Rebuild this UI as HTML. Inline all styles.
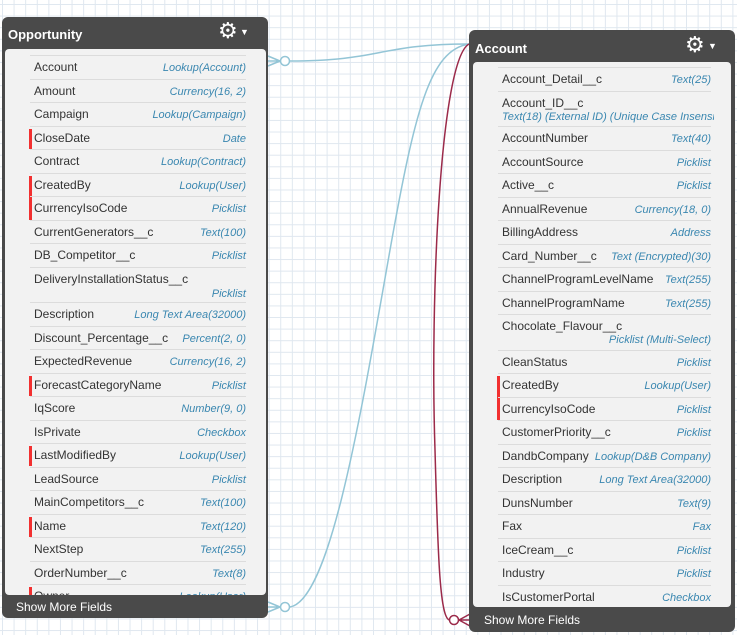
<!DOCTYPE html>
<html><head><meta charset="utf-8"><style>
body{margin:0;width:737px;height:635px;overflow:hidden;font-family:"Liberation Sans",sans-serif;
background-color:#fff;
background-image:linear-gradient(#dfe7ef 1px,transparent 1px),linear-gradient(90deg,#dfe7ef 1px,transparent 1px);
background-size:11.6px 11.6px;background-position:2px 4px;position:relative}
.box{position:absolute;background:#4a4a4a;border-radius:6px}
.hd{position:absolute;left:6px;top:0;color:#fff;font-weight:bold;font-size:13px}
.gear{position:absolute;top:1px;color:#fff;font-size:22px;line-height:26px}
.car{position:absolute;color:#fff;font-size:9px}
.pan{position:absolute;background:#f2f2f2;border-radius:4px;overflow:hidden}
.row{position:absolute;left:25px;right:20px;border-top:1px solid #dcdcdc;font-size:12px;color:#333}
.row .n{position:absolute;left:4px}
.row .t{position:absolute;right:0;font-style:italic;color:#3a87b0;font-size:11px;white-space:nowrap;margin-top:2px}
.red{position:absolute;left:-1px;width:3px;background:#f23030}
.ft{position:absolute;color:#fff;font-size:12px}
</style></head><body>
<svg style="position:absolute;left:0;top:0" width="737" height="635">
<g fill="none" stroke="#93c5d6" stroke-width="1.5">
<path d="M268 56 L280 61 M268 66 L280 61 M268 61 L280 61"/>
<circle cx="285" cy="61" r="4.5" fill="#fff"/>
<path d="M290 61 C380 61 380 44 469 44"/>
<path d="M268 602 L280 607 M268 612 L280 607 M268 607 L280 607"/>
<circle cx="285" cy="607" r="4.5" fill="#fff"/>
<path d="M290 607 C330 600 360 420 390 250 C415 110 430 50 469 44"/>
</g>
<g fill="none" stroke="#9b2a4a" stroke-width="1.5">
<path d="M469 44 C440 60 430 300 435 450 C438 560 440 620 450 620"/>
<circle cx="454" cy="620" r="4.5" fill="#fff"/>
<path d="M459 620 L470 620 M459 620 L470 614 M459 620 L470 626"/>
</g>
</svg>

<div class="box" style="left:2px;top:17px;width:266px;height:601px">
<div class="hd" style="top:10px">Opportunity</div>
<div class="gear" style="left:216px">⚙</div><div class="car" style="left:238px;top:10px">▼</div>
<div class="pan" style="left:3px;top:32px;width:261px;height:546px">
<div class="row" style="top:6px;height:23px"><span class="n" style="top:4px">Account</span><span class="t" style="top:4px">Lookup(Account)</span></div>
<div class="row" style="top:29.5px;height:23px"><span class="n" style="top:4px">Amount</span><span class="t" style="top:4px">Currency(16, 2)</span></div>
<div class="row" style="top:53px;height:23px"><span class="n" style="top:4px">Campaign</span><span class="t" style="top:4px">Lookup(Campaign)</span></div>
<div class="row" style="top:76.5px;height:23px"><div class="red" style="top:2px;height:20px"></div><span class="n" style="top:4px">CloseDate</span><span class="t" style="top:4px">Date</span></div>
<div class="row" style="top:100px;height:23px"><span class="n" style="top:4px">Contract</span><span class="t" style="top:4px">Lookup(Contract)</span></div>
<div class="row" style="top:123.5px;height:23px"><div class="red" style="top:2px;height:44px"></div><span class="n" style="top:4px">CreatedBy</span><span class="t" style="top:4px">Lookup(User)</span></div>
<div class="row" style="top:147px;height:23px"><span class="n" style="top:4px">CurrencyIsoCode</span><span class="t" style="top:4px">Picklist</span></div>
<div class="row" style="top:170.5px;height:23px"><span class="n" style="top:4px">CurrentGenerators__c</span><span class="t" style="top:4px">Text(100)</span></div>
<div class="row" style="top:194px;height:23px"><span class="n" style="top:4px">DB_Competitor__c</span><span class="t" style="top:4px">Picklist</span></div>
<div class="row" style="top:217.5px;height:35px"><span class="n" style="top:4px">DeliveryInstallationStatus__c</span><span class="t" style="top:18px">Picklist</span></div>
<div class="row" style="top:253px;height:23px"><span class="n" style="top:4px">Description</span><span class="t" style="top:4px">Long Text Area(32000)</span></div>
<div class="row" style="top:276.5px;height:23px"><span class="n" style="top:4px">Discount_Percentage__c</span><span class="t" style="top:4px">Percent(2, 0)</span></div>
<div class="row" style="top:300px;height:23px"><span class="n" style="top:4px">ExpectedRevenue</span><span class="t" style="top:4px">Currency(16, 2)</span></div>
<div class="row" style="top:323.5px;height:23px"><div class="red" style="top:2px;height:20px"></div><span class="n" style="top:4px">ForecastCategoryName</span><span class="t" style="top:4px">Picklist</span></div>
<div class="row" style="top:347px;height:23px"><span class="n" style="top:4px">IqScore</span><span class="t" style="top:4px">Number(9, 0)</span></div>
<div class="row" style="top:370.5px;height:23px"><span class="n" style="top:4px">IsPrivate</span><span class="t" style="top:4px">Checkbox</span></div>
<div class="row" style="top:394px;height:23px"><div class="red" style="top:2px;height:20px"></div><span class="n" style="top:4px">LastModifiedBy</span><span class="t" style="top:4px">Lookup(User)</span></div>
<div class="row" style="top:417.5px;height:23px"><span class="n" style="top:4px">LeadSource</span><span class="t" style="top:4px">Picklist</span></div>
<div class="row" style="top:441px;height:23px"><span class="n" style="top:4px">MainCompetitors__c</span><span class="t" style="top:4px">Text(100)</span></div>
<div class="row" style="top:464.5px;height:23px"><div class="red" style="top:2px;height:20px"></div><span class="n" style="top:4px">Name</span><span class="t" style="top:4px">Text(120)</span></div>
<div class="row" style="top:488px;height:23px"><span class="n" style="top:4px">NextStep</span><span class="t" style="top:4px">Text(255)</span></div>
<div class="row" style="top:511.5px;height:23px"><span class="n" style="top:4px">OrderNumber__c</span><span class="t" style="top:4px">Text(8)</span></div>
<div class="row" style="top:535px;height:23px"><div class="red" style="top:2px;height:20px"></div><span class="n" style="top:4px">Owner</span><span class="t" style="top:4px">Lookup(User)</span></div>
</div>
<div class="ft" style="left:14px;top:583px">Show More Fields</div>
</div>

<div class="box" style="left:469px;top:30px;width:266px;height:602px">
<div class="hd" style="top:11px">Account</div>
<div class="gear" style="left:216px;top:2px">⚙</div><div class="car" style="left:239px;top:11px">▼</div>
<div class="pan" style="left:4px;top:32px;width:258px;height:545px">
<div class="row" style="top:5px;height:23px"><span class="n" style="top:4px">Account_Detail__c</span><span class="t" style="top:4px">Text(25)</span></div>
<div class="row" style="top:28.5px;height:35px"><span class="n" style="top:4px">Account_ID__c</span><span class="t" style="top:17px;left:4px;right:auto;overflow:hidden;width:212px">Text(18) (External ID) (Unique Case Insensitive)</span></div>
<div class="row" style="top:64px;height:23px"><span class="n" style="top:4px">AccountNumber</span><span class="t" style="top:4px">Text(40)</span></div>
<div class="row" style="top:87.5px;height:23px"><span class="n" style="top:4px">AccountSource</span><span class="t" style="top:4px">Picklist</span></div>
<div class="row" style="top:111px;height:23px"><span class="n" style="top:4px">Active__c</span><span class="t" style="top:4px">Picklist</span></div>
<div class="row" style="top:134.5px;height:23px"><span class="n" style="top:4px">AnnualRevenue</span><span class="t" style="top:4px">Currency(18, 0)</span></div>
<div class="row" style="top:158px;height:23px"><span class="n" style="top:4px">BillingAddress</span><span class="t" style="top:4px">Address</span></div>
<div class="row" style="top:181.5px;height:23px"><span class="n" style="top:4px">Card_Number__c</span><span class="t" style="top:4px">Text (Encrypted)(30)</span></div>
<div class="row" style="top:205px;height:23px"><span class="n" style="top:4px">ChannelProgramLevelName</span><span class="t" style="top:4px">Text(255)</span></div>
<div class="row" style="top:228.5px;height:23px"><span class="n" style="top:4px">ChannelProgramName</span><span class="t" style="top:4px">Text(255)</span></div>
<div class="row" style="top:252px;height:35px"><span class="n" style="top:4px">Chocolate_Flavour__c</span><span class="t" style="top:17px">Picklist (Multi-Select)</span></div>
<div class="row" style="top:287.5px;height:23px"><span class="n" style="top:4px">CleanStatus</span><span class="t" style="top:4px">Picklist</span></div>
<div class="row" style="top:311px;height:23px"><div class="red" style="top:2px;height:44px"></div><span class="n" style="top:4px">CreatedBy</span><span class="t" style="top:4px">Lookup(User)</span></div>
<div class="row" style="top:334.5px;height:23px"><span class="n" style="top:4px">CurrencyIsoCode</span><span class="t" style="top:4px">Picklist</span></div>
<div class="row" style="top:358px;height:23px"><span class="n" style="top:4px">CustomerPriority__c</span><span class="t" style="top:4px">Picklist</span></div>
<div class="row" style="top:381.5px;height:23px"><span class="n" style="top:4px">DandbCompany</span><span class="t" style="top:4px">Lookup(D&amp;B Company)</span></div>
<div class="row" style="top:405px;height:23px"><span class="n" style="top:4px">Description</span><span class="t" style="top:4px">Long Text Area(32000)</span></div>
<div class="row" style="top:428.5px;height:23px"><span class="n" style="top:4px">DunsNumber</span><span class="t" style="top:4px">Text(9)</span></div>
<div class="row" style="top:452px;height:23px"><span class="n" style="top:4px">Fax</span><span class="t" style="top:4px">Fax</span></div>
<div class="row" style="top:475.5px;height:23px"><span class="n" style="top:4px">IceCream__c</span><span class="t" style="top:4px">Picklist</span></div>
<div class="row" style="top:499px;height:23px"><span class="n" style="top:4px">Industry</span><span class="t" style="top:4px">Picklist</span></div>
<div class="row" style="top:522.5px;height:23px"><span class="n" style="top:4px">IsCustomerPortal</span><span class="t" style="top:4px">Checkbox</span></div>
</div>
<div class="ft" style="left:15px;top:583px">Show More Fields</div>
</div>
</body></html>
